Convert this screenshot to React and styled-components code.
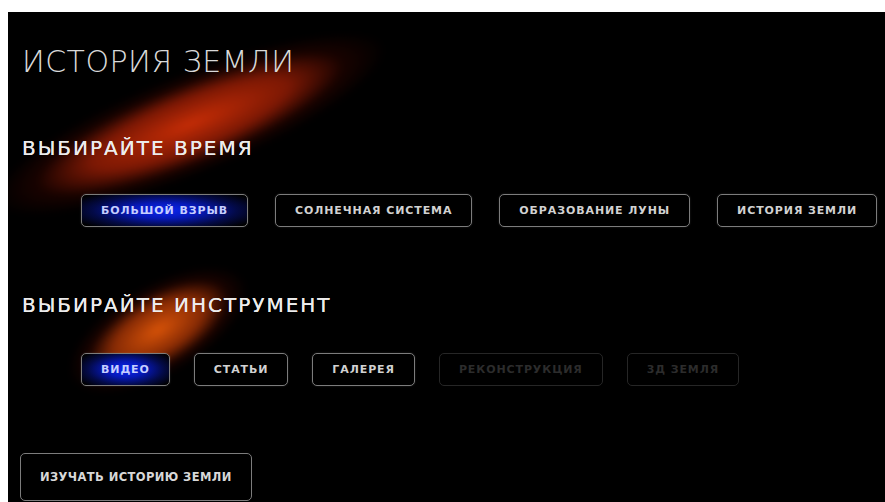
import React, { useState } from 'react';
import styled, { createGlobalStyle } from 'styled-components';

const GlobalStyle = createGlobalStyle`
  html, body {
    margin: 0;
    background: #fff;
  }
  body {
    padding: 12px 0 0 8px;
  }
`;

const Page = styled.div`
  position: relative;
  overflow: hidden;
  background: #000;
  height: 490px;
  padding: 35px 0 0 14px;
  box-sizing: border-box;
  font-family: 'DejaVu Sans', 'Liberation Sans', sans-serif;
  color: #e4e4e4;
`;

// warm light streaks behind the headings
const Glow = styled.div`
  position: absolute;
  left: ${(p) => p.x}px;
  top: ${(p) => p.y}px;
  width: ${(p) => p.w}px;
  height: ${(p) => p.h}px;
  transform: translate(-50%, -50%) rotate(${(p) => p.angle}deg);
  background: radial-gradient(closest-side, ${(p) => p.color} 0%, ${(p) => p.mid} 50%, rgba(40, 4, 0, 0.6) 78%, rgba(0, 0, 0, 0) 100%);
  filter: blur(3px);
  pointer-events: none;
`;

const Content = styled.div`
  position: relative;
  display: flex;
  flex-direction: column;
  align-items: flex-start;
`;

const Title = styled.h1`
  margin: 0;
  font-size: 30px;
  line-height: 1;
  font-weight: 200;
  letter-spacing: 0.5px;
  color: #d9d9d9;
`;

const Heading = styled.h2`
  margin: ${(p) => p.top}px 0 0;
  font-size: 20px;
  line-height: 1;
  font-weight: 500;
  letter-spacing: 2px;
  color: #ececec;
  text-shadow: 0 0 0.4px #ececec;
`;

const Row = styled.div`
  display: flex;
  gap: ${(p) => p.gap || 26}px;
  margin: ${(p) => p.top}px 0 0 59px;
`;

const Chip = styled.button`
  height: 33px;
  padding: 0 19px;
  border-radius: 5px;
  border: 1.5px solid ${(p) => (p.disabled ? '#262626' : '#7c7c7c')};
  background: ${(p) =>
    p.active
      ? 'radial-gradient(ellipse 62% 72% at center, #0b26f0 0%, #0618b8 35%, #030a48 70%, #000 100%)'
      : '#000'};
  color: ${(p) => (p.disabled ? '#2c2c2c' : p.active ? '#c6ceff' : '#d2d2d2')};
  font-family: inherit;
  font-size: 11px;
  font-weight: 600;
  letter-spacing: 0.9px;
  text-transform: uppercase;
  cursor: ${(p) => (p.disabled ? 'default' : 'pointer')};
  box-shadow: ${(p) => (p.disabled ? 'none' : '0 0 2px rgba(255,255,255,0.15)')};
`;

const StartButton = styled.button`
  margin: 67px 0 0 -2px;
  height: 48px;
  padding: 0 19px;
  border-radius: 5px;
  border: 1.5px solid #7c7c7c;
  background: #000;
  color: #d8d8d8;
  font-family: inherit;
  font-size: 11.5px;
  font-weight: 600;
  letter-spacing: 0.4px;
  cursor: pointer;
`;

const periods = ['Большой взрыв', 'Солнечная система', 'Образование Луны', 'История Земли'];

const tools = [
  { name: 'Видео' },
  { name: 'Статьи' },
  { name: 'Галерея' },
  { name: 'Реконструкция', off: true },
  { name: '3Д Земля', off: true },
];

export default function App() {
  const [period, setPeriod] = useState(0);
  const [tool, setTool] = useState(0);

  return (
    <>
      <GlobalStyle />
      <Page>
        <Glow x={182} y={112} w={420} h={100} angle={-22} color="#c42c06" mid="#7c1804" />
        <Glow x={150} y={318} w={200} h={90} angle={-30} color="#d65208" mid="#862a04" />
        <Content>
          <Title>ИСТОРИЯ ЗЕМЛИ</Title>

          <Heading top={61}>ВЫБИРАЙТЕ ВРЕМЯ</Heading>
          <Row top={36} gap={27}>
            {periods.map((name, i) => (
              <Chip key={name} active={i === period} onClick={() => setPeriod(i)}>
                {name}
              </Chip>
            ))}
          </Row>

          <Heading top={68}>ВЫБИРАЙТЕ ИНСТРУМЕНТ</Heading>
          <Row top={38} gap={24}>
            {tools.map((t, i) => (
              <Chip
                key={t.name}
                active={i === tool}
                disabled={t.off}
                onClick={() => setTool(i)}
              >
                {t.name}
              </Chip>
            ))}
          </Row>

          <StartButton>ИЗУЧАТЬ ИСТОРИЮ ЗЕМЛИ</StartButton>
        </Content>
      </Page>
    </>
  );
}
